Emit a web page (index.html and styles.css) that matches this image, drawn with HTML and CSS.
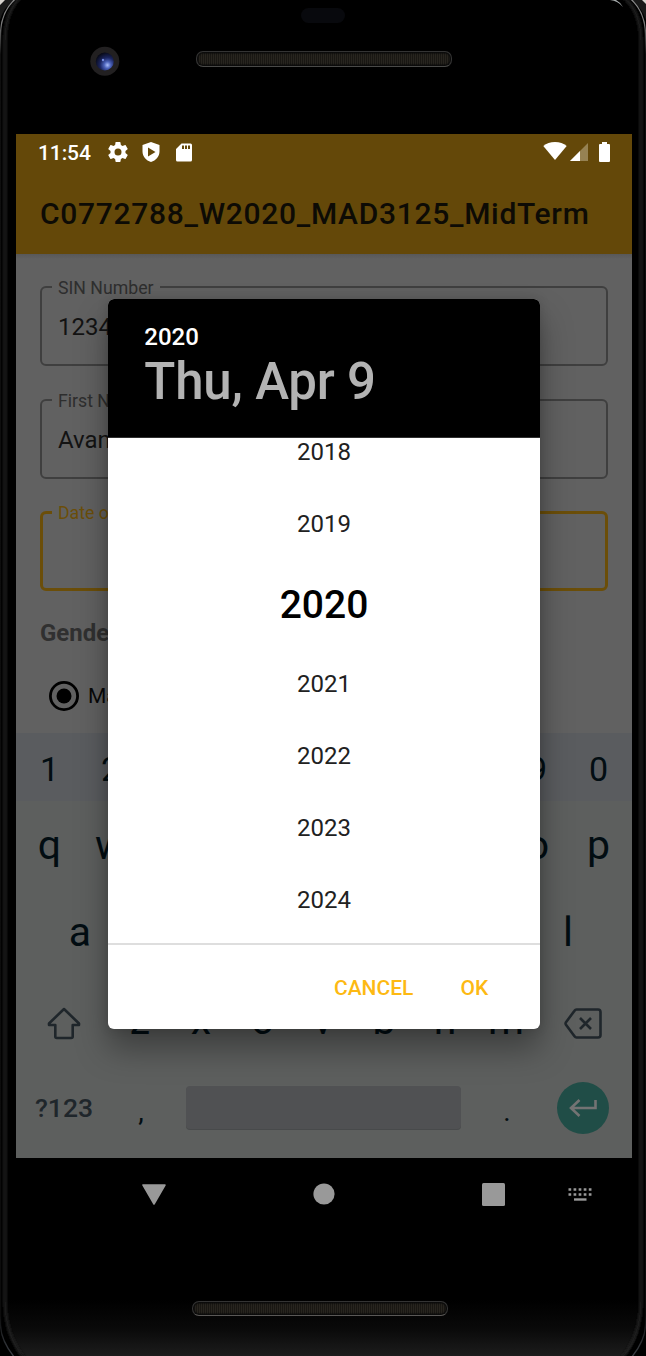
FILE: index.html
```
<!DOCTYPE html>
<html lang="en">
<head>
<meta charset="utf-8">
<title>MidTerm</title>
<link rel="stylesheet" href="styles.css">
</head>
<body>
<div class="phone">
  <svg class="frame" viewBox="0 0 646 1356" aria-hidden="true">
    <defs>
      <linearGradient id="rim" gradientUnits="userSpaceOnUse" x1="0" y1="0" x2="0" y2="1356">
        <stop offset="0" stop-color="#8c8c8c"/><stop offset=".018" stop-color="#777"/><stop offset=".04" stop-color="#0f0f0f"/><stop offset=".97" stop-color="#0c0c0c"/><stop offset="1" stop-color="#3b3f45"/>
      </linearGradient>
      <linearGradient id="chin" x1="0" y1="0" x2="0" y2="1">
        <stop offset="0" stop-color="#000"/><stop offset=".5" stop-color="#090909"/><stop offset="1" stop-color="#1c1c1c"/>
      </linearGradient>
      <radialGradient id="lens" cx=".65" cy=".7" r=".75">
        <stop offset="0" stop-color="#a9bdfb"/><stop offset=".25" stop-color="#4a61b8"/><stop offset=".55" stop-color="#1b2560"/><stop offset="1" stop-color="#06070f"/>
      </radialGradient>
      <filter id="soft" filterUnits="userSpaceOnUse" x="-10" y="-10" width="666" height="1376"><feGaussianBlur stdDeviation="1.3"/></filter>
    </defs>
    <path d="M0 0h14Q3 8 0 20zM646 0h-14q10 8 14 20z" fill="#1a1a1a"/>
    <path d="M0 0h5L0 5zM646 0h-4l4 4z" fill="#d8d4cf"/>
    <path d="M4 1300H642Q643 1338 624 1356H24Q4 1338 4 1300z" fill="url(#chin)"/>
    <path d="M22-4Q5 10 5 42V1300Q5 1335 24 1358M622-4q19 14 19 46V1300q0 35-19 58" fill="none" stroke="#1d1d1d" stroke-width="3.5" filter="url(#soft)"/>
    <path d="M19-4Q1 9 .5 34V1325Q1 1341 15 1358M627-4q18 13 18.500 38V1325q-.5 16-14.500 33" fill="none" stroke="url(#rim)" stroke-width="1.300"/>
    <path d="M610 0q8 1 13 7-3-5-7-7z" fill="#a5aaab"/>
    <circle cx="104.800" cy="61.200" r="14.500" fill="#222021"/>
    <circle cx="104.800" cy="61.500" r="9" fill="url(#lens)"/>
    <circle cx="103" cy="60" r="1.200" fill="#7188dc"/>
  </svg>

  <div class="top-bezel">
    <div class="sensor"></div>
    <div class="speaker"></div>
  </div>

  <div class="screen">
    <header class="status">
      <span class="clock">11:54</span>
      <svg class="gear" viewBox="2 2 20 20" width="20" height="20"><path fill="#fff" d="M19.430 12.980c.04-.32.07-.64.07-.98s-.03-.66-.07-.98l2.110-1.650c.19-.15.24-.42.12-.64l-2-3.460c-.12-.22-.39-.3-.61-.22l-2.490 1c-.52-.4-1.080-.73-1.690-.98l-.38-2.650A.49.49 0 0 0 14 2h-4c-.25 0-.46.18-.49.42l-.38 2.650c-.61.25-1.170.59-1.690.98l-2.490-1c-.23-.09-.49 0-.61.22l-2 3.460c-.13.22-.07.49.12.64l2.110 1.650c-.04.32-.07.65-.07.98s.03.66.07.98l-2.110 1.650c-.19.15-.24.42-.12.64l2 3.460c.12.22.39.3.61.22l2.490-1c.52.4 1.080.73 1.690.98l.38 2.650c.03.24.24.42.49.42h4c.25 0 .46-.18.49-.42l.38-2.650c.61-.25 1.170-.59 1.690-.98l2.490 1c.23.09.49 0 .61-.22l2-3.460c.12-.22.07-.49-.12-.64zM12 15.500a3.500 3.500 0 1 1 0-7 3.500 3.500 0 0 1 0 7z"/></svg>
      <svg class="shield" viewBox="0 0 18 20" width="18" height="20"><path fill="#fff" fill-rule="evenodd" d="M9 0 .5 3v6.500C.5 14.500 4 18.500 9 20c5-1.500 8.500-5.500 8.500-10.500V3zM6 5.500v9l7.500-4.500z"/></svg>
      <svg class="sd" viewBox="0 0 16 19" width="16" height="19"><path fill="#fff" fill-rule="evenodd" d="M5.500.5h9Q16 .5 16 2v15q0 1.500-1.500 1.500h-13Q0 18.500 0 17V6zM6 2.500V6h2V2.500zm3 0V6h2V2.500zm3 0V6h2V2.500z"/></svg>
      <span class="spacer"></span>
      <svg class="wifi" viewBox="0 0 24 18" width="24" height="18"><path fill="#fff" d="M12 18 .3 4Q5 0 12 0t11.700 4z"/></svg>
      <svg class="signal" viewBox="0 0 18 18" width="18" height="18"><path fill="#968253" d="M18 0v18H0z"/><path fill="#fff" d="M10 8v10H0z"/></svg>
      <svg class="battery" viewBox="0 0 11 20" width="11" height="20"><path fill="#fff" d="M3 0h5v2h2q1 0 1 1v16q0 1-1 1H1q-1 0-1-1V3q0-1 1-1h2z"/></svg>
    </header>
    <h1 class="title">C0772788_W2020_MAD3125_MidTerm</h1>

    <main class="form">
      <fieldset class="field"><legend>SIN Number</legend><span>1234</span></fieldset>
      <fieldset class="field"><legend>First Name</legend><span>Avani</span></fieldset>
      <fieldset class="field focused"><legend>Date of Birth</legend></fieldset>
      <h2 class="gender">Gender</h2>
      <label class="radio">
        <svg viewBox="0 0 30 30" width="30" height="30"><circle cx="15" cy="15" r="13.600" fill="none" stroke="#000" stroke-width="2.800"/><circle cx="15" cy="15" r="7.500"/></svg>
        <span>Male</span>
      </label>
    </main>

    <section class="keyboard">
      <div class="keys digits"><span>1</span><span>2</span><span></span><span></span><span></span><span></span><span></span><span></span><span>9</span><span>0</span></div>
      <div class="keys top-row"><span>q</span><span>w</span><span></span><span></span><span></span><span></span><span></span><span></span><span>o</span><span>p</span></div>
      <div class="keys"><span>a</span><span></span><span></span><span></span><span></span><span></span><span></span><span></span><span>l</span></div>
      <div class="keys shifted">
        <span class="wide"><svg viewBox="0 0 34 33" width="34" height="33"><path d="M17 2 2 16.500V18h6.300v11.500q0 1.500 1.500 1.500h14.400q1.500 0 1.500-1.500V18H32v-1.500z" fill="none" stroke="#1f262b" stroke-width="2.600" stroke-linejoin="round"/></svg></span>
        <span>z</span><span>x</span><span>c</span><span>v</span><span>b</span><span>n</span><span>m</span>
        <span class="wide"><svg viewBox="0 0 38 31" width="38" height="31"><path d="M12.500 1.500H34q2.500 0 2.500 2.500v23q0 2.500-2.500 2.500H12.500q-1.200 0-2-1.200L1.800 16.500q-.5-1 0-2l8.700-11.800q.8-1.200 2-1.200zM16 10l11 11M27 10 16 21" fill="none" stroke="#1f262b" stroke-width="2.600" stroke-linejoin="round"/></svg></span>
      </div>
      <div class="bottom-keys">
        <span class="symbols">?123</span>
        <span class="comma">,</span>
        <span class="space"></span>
        <span class="dot">.</span>
        <span class="enter"><svg viewBox="0 0 30 20" width="30" height="20"><path d="M27.500 2v8H3M11.500 2 3 10l8.500 8" fill="none" stroke="#737373" stroke-width="2.600"/></svg></span>
      </div>
    </section>

    <nav class="nav">
      <svg viewBox="0 0 24 21" width="24" height="21"><path d="M1 1h22L12 20z" fill="#999" stroke="#999" stroke-width="1.500" stroke-linejoin="round"/></svg>
      <svg viewBox="0 0 22 22" width="22" height="22"><circle cx="11" cy="11" r="10.600" fill="#999"/></svg>
      <svg viewBox="0 0 23 23" width="23" height="23"><rect width="23" height="23" rx="1.500" fill="#999"/></svg>
      <svg viewBox="0 0 24 14" width="24" height="14"><path d="M.5 2.500h23M.5 7.500h23" stroke="#999" stroke-width="2.700" stroke-dasharray="2.700 2.370"/><path d="M6 12.500h12.500" stroke="#999" stroke-width="2.400"/></svg>
    </nav>
  </div>
  <div class="speaker low"></div>

  <div class="dialog">
    <div class="dialog-head">
      <div class="year">2020</div>
      <div class="date">Thu, Apr 9</div>
    </div>
    <div class="years">
      <ul>
        <li>2018</li><li>2019</li><li class="active">2020</li><li>2021</li><li>2022</li><li>2023</li><li>2024</li>
      </ul>
    </div>
    <div class="actions"><button>CANCEL</button><button>OK</button></div>
  </div>
</div>
</body>
</html>
```
FILE: styles.css
```
* { box-sizing: border-box; }
body { margin: 0; background: #000; font-family: Roboto, "Liberation Sans", sans-serif; }
svg { display: block; flex: none; }
.phone { position: relative; width: 646px; height: 1356px; overflow: hidden; background: #000; }
.frame { position: absolute; inset: 0; width: 646px; height: 1356px; }

.top-bezel { height: 134px; padding-top: 8px; }
.sensor { width: 44px; height: 15px; margin-left: 301px; border-radius: 8px; background: #08090d; }
.speaker {
  position: relative; width: 256px; height: 16px; margin: 28px 0 0 196px;
  border: 1.500px solid #343434; border-bottom-color: #4a4a48; border-radius: 7px;
  background: repeating-linear-gradient(90deg, #28251f 0 1px, #191713 1px 2px);
  box-shadow: inset 0 0 1px 1.500px #0b0b0b;
}
.speaker.low { margin: 71px 0 0 192px; height: 15px; border-bottom-color: #5a5856; }

.screen { position: relative; width: 616px; margin-left: 16px; }
.status { display: flex; align-items: center; height: 36px; padding: 0 22px; background: #644809; }
.clock { width: 53px; font-size: 21px; font-weight: 500; color: #fff; line-height: 36px; padding-top: 2px; letter-spacing: -.1px; }
.gear { margin-left: 16.500px; }
.shield { margin-left: 14px; }
.sd { margin-left: 16.500px; }
.spacer { flex: 1; }
.wifi { margin-right: 3px; margin-top: -2px; }
.signal { margin-right: 11px; }
.title { margin: 0; height: 84px; padding: 2px 0 0 24px; background: #644809; color: #0d0b05; font-size: 30px; line-height: 84px; font-weight: 500; white-space: nowrap; letter-spacing: .7px; }

.form { height: 479px; padding: 24px 24px 0; background: linear-gradient(#585858, #616161 5px); }
.field { height: 88px; margin: 0 0 24.500px; padding: 0 0 0 16px; border: 2px solid #3f3f3f; border-radius: 6px; min-width: 0; }
.field legend { height: 18px; margin-left: -6px; padding: 0 6px; font-size: 17.700px; line-height: 20px; color: #2e2e2e; }
.field span { display: block; font-size: 24px; line-height: 28px; margin-top: 17px; color: #131313; }
.focused { border: 3px solid #6b4e09; padding-left: 15px; }
.focused legend { color: #6b4e09; }
.gender { margin: 0; padding-top: 3px; font-size: 24px; line-height: 28px; font-weight: 700; color: #303030; }
.radio { display: flex; align-items: center; margin: 34px 0 0 9px; gap: 9px; font-size: 21px; color: #080808; }

.keyboard { height: 425px; background: #5d5f5e; color: #020d12; }
.keys { display: flex; justify-content: center; height: 88px; font-size: 41px; line-height: 88px; text-align: center; }
.keys span { width: 61px; flex: none; }
.digits { height: 68px; background: #5a5c5f; font-size: 34px; line-height: 73px; }
.top-row { height: 87px; }
.shifted { justify-content: flex-start; padding-left: 2.500px; }
.shifted .wide { width: 91px; display: flex; align-items: center; justify-content: center; padding-top: 7px; }
.shifted .wide:last-child { width: 93px; }
.bottom-keys { display: grid; grid-template-columns: 96px 58px 307px 60px 92px; height: 87px; align-items: center; text-align: center; font-size: 28px; }
.symbols { font-size: 26.500px; font-weight: 500; color: #1f262b; }
.comma, .dot { padding-top: 8px; }
.space { height: 43px; margin: 0 16px; border-radius: 4px; background: #505153; box-shadow: 0 1px #484a4b; }
.enter { width: 52px; height: 52px; margin: 1px auto 0; border-radius: 50%; background: #204d47; display: flex; align-items: center; justify-content: center; }

.nav { display: flex; align-items: center; height: 72px; padding-left: 125.500px; }
.nav svg:nth-child(2) { margin-left: 147px; }
.nav svg:nth-child(3) { margin-left: 147.500px; }
.nav svg:nth-child(4) { margin-left: 62.500px; }

.dialog { position: absolute; left: 108.300px; top: 299px; width: 431.400px; height: 730px; border-radius: 6px; overflow: hidden; background: #fff; box-shadow: 0 20px 32px rgba(0,0,0,.34), 0 0 12px rgba(0,0,0,.14); }
.dialog-head { height: 139px; padding: 24px 36px 0; background: #000; color: #b3b3b3; border-bottom: 1px solid #303030; }
.year { font-size: 24px; line-height: 28px; font-weight: 500; color: #fff; }
.date { font-size: 51px; line-height: 60px; font-weight: 500; white-space: nowrap; letter-spacing: -.2px; padding-top: 1px; }
.years { height: 507px; overflow: hidden; border-bottom: 2px solid #dedede; }
.years ul { margin: -22px 0 0; padding: 0; list-style: none; text-align: center; font-size: 24px; line-height: 72px; color: #212121; }
.years .active { height: 88px; font-size: 39px; line-height: 90px; font-weight: 500; color: #000; }
.actions { display: flex; justify-content: flex-end; height: 84px; padding: 1px 51.500px 0 0; gap: 47px; }
.actions button { border: 0; padding: 0; background: none; color: #fdb913; font: 500 21px/84px Roboto, "Liberation Sans", sans-serif; }
```
